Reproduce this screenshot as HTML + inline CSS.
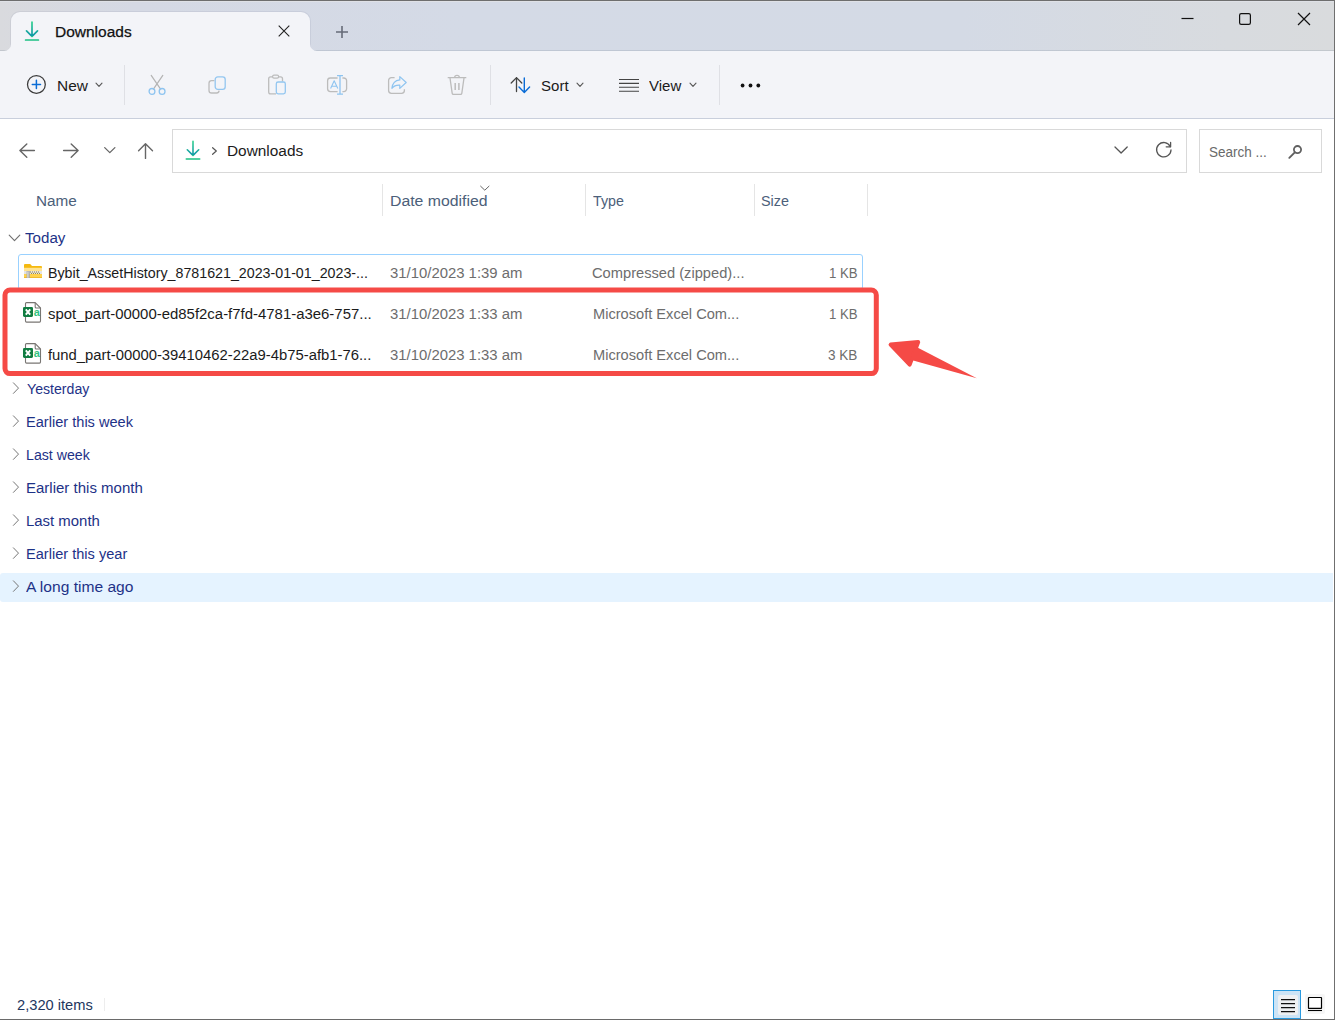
<!DOCTYPE html>
<html lang="en">
<head>
<meta charset="utf-8">
<title>Downloads</title>
<style>
html,body{margin:0;padding:0;}
body{width:1335px;height:1020px;position:relative;overflow:hidden;background:#fff;font-family:"Liberation Sans",sans-serif;color:#1b1b1b;}
.abs{position:absolute;}
.t{position:absolute;white-space:nowrap;line-height:20px;height:20px;transform-origin:0 50%;}
#titlebar{left:0;top:0;width:1335px;height:51px;background:linear-gradient(90deg,#d9dade 0%,#d5d9e4 10%,#d4dae6 35%,#d4dae5 72%,#d8dbdf 92%,#d9dbdd 100%);}
#topline{left:0;top:0;width:1335px;height:1px;background:#6e6e6e;}
#topline2{left:0;top:1px;width:1335px;height:1px;background:#dfe1e6;}
#rightline{left:1334px;top:0;width:1px;height:1020px;background:#6f6f6f;}
#bottomline{left:0;top:1019px;width:1335px;height:1px;background:#6a6a6a;}
#tab{left:11px;top:12px;width:299px;height:39px;background:#f3f4f8;border-radius:9px 9px 0 0;box-shadow:0 0 0 1px rgba(100,110,135,0.10);}
.tabfoot{width:7px;height:7px;top:44px;}
#toolbar{left:0;top:51px;width:1335px;height:67px;background:#f3f4f8;}
#toolline{left:0;top:118px;width:1335px;height:1px;background:#c9cfdc;}
.sep{width:1px;top:65px;height:40px;background:#dfe0e5;}
#addr{left:172px;top:129px;width:1013px;height:42px;border:1px solid #d9d9d9;background:#fff;box-sizing:content-box;}
#search{left:1199px;top:129px;width:121px;height:42px;border:1px solid #d9d9d9;background:#fff;}
.colsep{width:1px;top:184px;height:32px;background:#e5e5e5;}
.hdr{color:#4c607a;font-size:15.4px;}
.grp{color:#1e3287;font-size:15.4px;}
.fn{color:#1b1b1b;font-size:15.4px;}
.meta{color:#6d6d6d;font-size:15.4px;}
#selrow{left:18px;top:254px;width:843px;height:34px;border:1px solid #99d1ff;border-radius:3px;background:#fff;}
#hot{left:0;top:573px;width:1333px;height:29px;background:#e5f3ff;border-radius:3px 0 0 3px;}
#redbox{left:4px;top:290px;width:870px;height:82px;border:4px solid #f44747;border-radius:9px;box-sizing:content-box;}
svg{position:absolute;overflow:visible;}
</style>
</head>
<body>
<!-- title bar -->
<div class="abs" id="titlebar"></div>
<div class="abs" style="left:0;top:50px;width:1335px;height:1px;background:rgba(120,130,150,0.22);"></div>
<div class="abs" id="tab"></div>
<svg class="tabfoot" style="left:4px" width="7" height="7" viewBox="0 0 7 7"><path d="M7 0V7H0A7 7 0 0 0 7 0Z" fill="#f3f4f8"/></svg>
<svg class="tabfoot" style="left:310px" width="7" height="7" viewBox="0 0 7 7"><path d="M0 0V7H7A7 7 0 0 1 0 0Z" fill="#f3f4f8"/></svg>
<div class="abs" id="toolbar"></div>
<div class="abs" id="toolline"></div>
<div class="abs" id="topline"></div>
<div class="abs" id="topline2"></div>

<!-- tab content -->
<svg style="left:24px;top:20px" width="16" height="22" viewBox="0 0 16 22">
<defs><linearGradient id="dl" x1="0" y1="0" x2="0" y2="1"><stop offset="0" stop-color="#2fd08f"/><stop offset="0.75" stop-color="#1199a6"/><stop offset="0.8" stop-color="#1cc083"/><stop offset="1" stop-color="#1cc083"/></linearGradient></defs>
<path d="M8 2V16M2.5 10.8L8 16.3L13.5 10.8M1.6 20H14.4" fill="none" stroke="url(#dl)" stroke-width="1.7" stroke-linecap="round" stroke-linejoin="round"/>
</svg>
<div class="t" id="tabtitle" style="-webkit-text-stroke:0.25px #111;left:54.7px;top:22.0px;font-size:15.4px;color:#111;transform:scaleX(1.0064);">Downloads</div>
<svg style="left:278px;top:25px" width="12" height="12" viewBox="0 0 12 12"><path d="M0.7 0.7L11.3 11.3M11.3 0.7L0.7 11.3" stroke="#222" stroke-width="1.1" fill="none"/></svg>
<svg style="left:335px;top:25px" width="14" height="14" viewBox="0 0 14 14"><path d="M7 1V13M1 7H13" stroke="#666b78" stroke-width="1.6" fill="none"/></svg>

<!-- window controls -->
<svg style="left:1181px;top:12px" width="14" height="14" viewBox="0 0 14 14"><path d="M0.5 6.5H12.5" stroke="#111" stroke-width="1.2" fill="none"/></svg>
<svg style="left:1238px;top:12px" width="14" height="14" viewBox="0 0 14 14"><rect x="1.6" y="1.6" width="10.8" height="10.8" rx="1.6" stroke="#111" stroke-width="1.2" fill="none"/></svg>
<svg style="left:1297px;top:12px" width="14" height="14" viewBox="0 0 14 14"><path d="M1 1L13 13M13 1L1 13" stroke="#111" stroke-width="1.2" fill="none"/></svg>

<!-- TOOLBAR -->
<div id="tb">
<!-- New -->
<svg style="left:26px;top:74px" width="21" height="21" viewBox="0 0 21 21"><circle cx="10.4" cy="10.4" r="8.9" fill="none" stroke="#3a3a3a" stroke-width="1.25"/><path d="M10.4 6.3V14.5M6.3 10.4H14.5" stroke="#0a6cd6" stroke-width="1.5" stroke-linecap="round" fill="none"/></svg>
<div class="t" id="tnew" style="left:56.5px;top:76.0px;font-size:15.4px;transform:scaleX(1.0038);">New</div>
<svg style="left:95px;top:82px" width="8" height="6" viewBox="0 0 8 6"><path d="M1 1.2L4 4.4L7 1.2" stroke="#555" stroke-width="1.1" fill="none" stroke-linecap="round" stroke-linejoin="round"/></svg>
<div class="abs sep" style="left:124px"></div>
<!-- cut -->
<svg style="left:147px;top:74px" width="20" height="22" viewBox="0 0 20 22"><path d="M4.2 1.4L13.6 15.2M15.8 1.4L6.4 15.2" stroke="#b4b4b4" stroke-width="1.2" fill="none" stroke-linecap="round"/><circle cx="5" cy="17.4" r="2.9" fill="none" stroke="#8ec4f0" stroke-width="1.3"/><circle cx="15.1" cy="17.4" r="2.9" fill="none" stroke="#8ec4f0" stroke-width="1.3"/></svg>
<!-- copy -->
<svg style="left:207px;top:75px" width="20" height="20" viewBox="0 0 20 20"><path d="M7.4 5.6H4.6A2.6 2.6 0 0 0 2 8.2V15.4A2.6 2.6 0 0 0 4.6 18H9.6A2.6 2.6 0 0 0 12.1 15.6" fill="none" stroke="#bcbcbc" stroke-width="1.3"/><rect x="8.2" y="1.9" width="10" height="12.4" rx="2.6" fill="none" stroke="#93c6f0" stroke-width="1.3"/></svg>
<!-- paste -->
<svg style="left:267px;top:74px" width="20" height="22" viewBox="0 0 20 22"><path d="M9 19.8H3.6A1.9 1.9 0 0 1 1.7 17.9V4.7A1.9 1.9 0 0 1 3.6 2.8H13.6A1.9 1.9 0 0 1 15.5 4.7V7.6" fill="none" stroke="#bcbcbc" stroke-width="1.3"/><rect x="5.6" y="1.2" width="6" height="2.9" rx="1.4" fill="#f3f4f8" stroke="#bcbcbc" stroke-width="1.2"/><rect x="9.3" y="8" width="9" height="11.9" rx="1.8" fill="#f3f4f8" stroke="#93c6f0" stroke-width="1.3"/></svg>
<!-- rename -->
<svg style="left:326px;top:74px" width="22" height="22" viewBox="0 0 22 22"><path d="M11.6 4H4.4A2.8 2.8 0 0 0 1.6 6.800000000000001V14.8A2.8 2.8 0 0 0 4.4 17.6H11.6M16.4 4H17.8A2.8 2.8 0 0 1 20.6 6.8V14.8A2.8 2.8 0 0 1 17.8 17.6H16.4" fill="none" stroke="#bcbcbc" stroke-width="1.3"/><path d="M11 1.6H17M11 20.2H17M14 1.6V20.2" stroke="#8ec4f0" stroke-width="1.3" fill="none"/><path d="M4.6 14.6L8.2 6.8L11.8 14.6M5.8 12.2H10.6" stroke="#8ec4f0" stroke-width="1.1" fill="none" stroke-linejoin="round"/></svg>
<!-- share -->
<svg style="left:387px;top:74px" width="22" height="22" viewBox="0 0 22 22"><path d="M7.6 3.7H4.4A2.8 2.8 0 0 0 1.6 6.5V16.6A2.8 2.8 0 0 0 4.4 19.4H14.6A2.8 2.8 0 0 0 17.4 16.6V15.2" fill="none" stroke="#bcbcbc" stroke-width="1.3"/><path d="M12.8 2.6L19.2 8.5L12.8 14.4V11.2C9.4 11 6.8 12 4.9 14.4C5.4 9.600000000000001 8.2 6.4 12.8 5.9Z" fill="none" stroke="#8ec4f0" stroke-width="1.2" stroke-linejoin="round"/></svg>
<!-- delete -->
<svg style="left:447px;top:74px" width="20" height="22" viewBox="0 0 20 22"><path d="M1.2 3.7H18.8M7.7 3.5A2.3 2.1 0 0 1 12.3 3.5M3 4L5.200000000000001 19.3A1.2 1.2 0 0 0 6.4 20.3H13.6A1.2 1.2 0 0 0 14.8 19.3L17 4" fill="none" stroke="#bcbcbc" stroke-width="1.3" stroke-linecap="round"/><path d="M8.2 9V16M11.9 9V16" stroke="#bcbcbc" stroke-width="1.5" fill="none"/></svg>
<div class="abs sep" style="left:490px"></div>
<!-- sort -->
<svg style="left:509px;top:75px" width="24" height="20" viewBox="0 0 24 20"><path d="M7.5 16.5V2.7M2.2 8L7.5 2.6L12.8 8" stroke="#444" stroke-width="1.3" fill="none" stroke-linecap="round" stroke-linejoin="round"/><path d="M15.3 3V17.2M10 12L15.3 17.4L20.6 12" stroke="#0a6cd6" stroke-width="1.4" fill="none" stroke-linecap="round" stroke-linejoin="round"/></svg>
<div class="t" id="tsort" style="left:541.1px;top:76.0px;font-size:15.4px;transform:scaleX(0.9762);">Sort</div>
<svg style="left:576px;top:82px" width="8" height="6" viewBox="0 0 8 6"><path d="M1 1.2L4 4.4L7 1.2" stroke="#555" stroke-width="1.1" fill="none" stroke-linecap="round" stroke-linejoin="round"/></svg>
<!-- view -->
<svg style="left:619px;top:78px" width="20" height="14" viewBox="0 0 20 14"><path d="M0 1.5H20M0 5.4H20M0 9.3H20M0 13.2H20" stroke="#444" stroke-width="1.1" fill="none"/></svg>
<div class="t" id="tview" style="left:649.0px;top:76.0px;font-size:15.4px;transform:scaleX(0.9742);">View</div>
<svg style="left:689px;top:82px" width="8" height="6" viewBox="0 0 8 6"><path d="M1 1.2L4 4.4L7 1.2" stroke="#555" stroke-width="1.1" fill="none" stroke-linecap="round" stroke-linejoin="round"/></svg>
<div class="abs sep" style="left:719px"></div>
<svg style="left:739px;top:82px" width="22" height="6" viewBox="0 0 22 6"><circle cx="3.6" cy="3.5" r="1.9" fill="#111"/><circle cx="11.5" cy="3.5" r="1.9" fill="#111"/><circle cx="19.3" cy="3.5" r="1.9" fill="#111"/></svg>
</div>

<!-- ADDRESS -->
<div id="ab">
<svg style="left:18px;top:142px" width="18" height="18" viewBox="0 0 18 18"><path d="M16.4 8.5H2M8.8 1.9L1.9 8.5L8.8 15.3" stroke="#666" stroke-width="1.4" fill="none" stroke-linecap="round" stroke-linejoin="round"/></svg>
<svg style="left:62px;top:142px" width="18" height="18" viewBox="0 0 18 18"><path d="M1.6 8.5H16M9.2 1.9L16.1 8.5L9.2 15.3" stroke="#666" stroke-width="1.4" fill="none" stroke-linecap="round" stroke-linejoin="round"/></svg>
<svg style="left:103px;top:146px" width="14" height="8" viewBox="0 0 14 8"><path d="M1.7 1.6L6.8 6.6L11.9 1.6" stroke="#666" stroke-width="1.3" fill="none" stroke-linecap="round" stroke-linejoin="round"/></svg>
<svg style="left:137px;top:142px" width="18" height="18" viewBox="0 0 18 18"><path d="M8.5 16.4V2M1.6 8.8L8.5 1.8L15.5 8.8" stroke="#666" stroke-width="1.4" fill="none" stroke-linecap="round" stroke-linejoin="round"/></svg>
<div class="abs" id="addr"></div>
<svg style="left:185px;top:139px" width="16" height="22" viewBox="0 0 16 22"><path d="M8 2.2V16M2.3 10.8L8 16.4L13.7 10.8M1.3 20H14.7" fill="none" stroke="url(#dl)" stroke-width="1.6" stroke-linecap="round" stroke-linejoin="round"/></svg>
<svg style="left:211px;top:146px" width="7" height="10" viewBox="0 0 7 10"><path d="M1.6 1.7L5.3 5L1.6 8.3" stroke="#555" stroke-width="1.2" fill="none" stroke-linecap="round" stroke-linejoin="round"/></svg>
<div class="t" id="taddr" style="left:227.3px;top:141.0px;font-size:15.4px;transform:scaleX(1.0003);">Downloads</div>
<svg style="left:1113px;top:145px" width="16" height="10" viewBox="0 0 16 10"><path d="M2 2L8.1 8L14.2 2" stroke="#555" stroke-width="1.3" fill="none" stroke-linecap="round" stroke-linejoin="round"/></svg>
<svg style="left:1154px;top:140px" width="20" height="20" viewBox="0 0 20 20"><path d="M16.3 6.6A7.2 7.2 0 1 0 17 10" stroke="#555" stroke-width="1.3" fill="none" stroke-linecap="round"/><path d="M16.6 2.4V6.8H12.2" stroke="#555" stroke-width="1.3" fill="none" stroke-linecap="round" stroke-linejoin="round"/></svg>
<div class="abs" id="search"></div>
<div class="t" id="tsearch" style="left:1209.1px;top:142.0px;font-size:15.4px;color:#6a6a6a;transform:scaleX(0.8760);">Search ...</div>
<svg style="left:1286px;top:143px" width="18" height="18" viewBox="0 0 18 18"><circle cx="11.5" cy="6.6" r="3.6" fill="none" stroke="#606060" stroke-width="1.8"/><path d="M8.8 9.3L3.3 14.8" stroke="#606060" stroke-width="1.9" fill="none" stroke-linecap="round"/></svg>
</div>

<!-- LIST -->
<div id="list">
<div class="abs colsep" style="left:382px"></div>
<div class="abs colsep" style="left:585px"></div>
<div class="abs colsep" style="left:754px"></div>
<div class="abs colsep" style="left:867px"></div>
<div class="t hdr" id="hname" style="left:36.1px;top:191.0px;transform:scaleX(0.9941);">Name</div>
<div class="t hdr" id="hdate" style="left:389.7px;top:191.0px;transform:scaleX(1.0276);">Date modified</div>
<div class="t hdr" id="htype" style="left:593.2px;top:191.0px;transform:scaleX(0.9255);">Type</div>
<div class="t hdr" id="hsize" style="left:761.2px;top:191.0px;transform:scaleX(0.9325);">Size</div>
<svg style="left:480px;top:185px" width="10" height="6" viewBox="0 0 10 6"><path d="M0.6 1.2L4.8 5.2L9 1.2" stroke="#666" stroke-width="1" fill="none" stroke-linecap="round" stroke-linejoin="round"/></svg>
<svg style="left:8px;top:233px" width="12" height="9" viewBox="0 0 12 9"><path d="M1.2 2.2L6.5 7.6L11.8 2.2" stroke="#707070" stroke-width="1.15" fill="none" stroke-linecap="round" stroke-linejoin="round"/></svg>
<div class="t grp" id="g0" style="left:25.3px;top:228.0px;transform:scaleX(0.9843);">Today</div>
<div class="abs" id="hot"></div>
<div class="abs" id="selrow"></div>
<svg style="left:24px;top:264px" width="18" height="14" viewBox="0 0 18 14"><path d="M0 1A1 1 0 0 1 1 0H6.2L8 2H17A1 1 0 0 1 18 3V13A1 1 0 0 1 17 14H1A1 1 0 0 1 0 13Z" fill="#f5b90f"/><rect x="0" y="3.8" width="18" height="3.4" fill="#ffe391"/><rect x="0" y="7" width="18" height="3.2" fill="#e4e4e4"/><rect x="0" y="10.1" width="18" height="3.9" fill="#ffd24d"/><rect x="0" y="13.3" width="18" height="0.7" fill="#eab220"/><path d="M6 8H16M7 9.4H17" stroke="#8a7423" stroke-width="0.9" stroke-dasharray="1 1" fill="none"/><rect x="2.6" y="7" width="3.2" height="7" fill="#a9a9a9"/><rect x="3.2" y="7.4" width="1.4" height="6.3" fill="#d6d6d6"/></svg>
<div class="t fn" id="n0" style="left:47.7px;top:263.0px;transform:scaleX(0.9256);">Bybit_AssetHistory_8781621_2023-01-01_2023-...</div>
<div class="t meta" id="d0" style="left:389.7px;top:263.0px;transform:scaleX(0.9670);">31/10/2023 1:39 am</div>
<div class="t meta" id="ty0" style="left:592.1px;top:263.0px;transform:scaleX(0.9531);">Compressed (zipped)...</div>
<div class="t meta" id="s0" style="left:829.1px;top:263.0px;transform:scaleX(0.8572);">1 KB</div>
<svg style="left:22px;top:302px" width="20" height="21" viewBox="0 0 20 21"><path d="M3.5 1.600000000000001A1 1 0 0 1 4.5 0.6H13.2L18.5 6V19.1A1 1 0 0 1 17.5 20.1H4.5A1 1 0 0 1 3.5 19.1Z" fill="#fff" stroke="#797673" stroke-width="1.1" stroke-linejoin="round"/><path d="M13.2 0.8V5A1 1 0 0 0 14.2 6H18.3" fill="none" stroke="#797673" stroke-width="1.1"/><rect x="1" y="5" width="10" height="9.9" rx="1.3" fill="#107c41"/><path d="M3.8 7.3L8.2 12.7M8.2 7.3L3.8 12.7" stroke="#fff" stroke-width="1.9" fill="none"/><text x="11.7" y="14" style="font-family:'Liberation Sans',sans-serif;font-size:11px;font-weight:bold" fill="#33c481">a</text></svg>
<div class="t fn" id="n1" style="left:48.1px;top:304.0px;transform:scaleX(0.9700);">spot_part-00000-ed85f2ca-f7fd-4781-a3e6-757...</div>
<div class="t meta" id="d1" style="left:389.7px;top:304.0px;transform:scaleX(0.9670);">31/10/2023 1:33 am</div>
<div class="t meta" id="ty1" style="left:593.1px;top:304.0px;transform:scaleX(0.9500);">Microsoft Excel Com...</div>
<div class="t meta" id="s1" style="left:829.1px;top:304.0px;transform:scaleX(0.8572);">1 KB</div>
<svg style="left:22px;top:343px" width="20" height="21" viewBox="0 0 20 21"><path d="M3.5 1.600000000000001A1 1 0 0 1 4.5 0.6H13.2L18.5 6V19.1A1 1 0 0 1 17.5 20.1H4.5A1 1 0 0 1 3.5 19.1Z" fill="#fff" stroke="#797673" stroke-width="1.1" stroke-linejoin="round"/><path d="M13.2 0.8V5A1 1 0 0 0 14.2 6H18.3" fill="none" stroke="#797673" stroke-width="1.1"/><rect x="1" y="5" width="10" height="9.9" rx="1.3" fill="#107c41"/><path d="M3.8 7.3L8.2 12.7M8.2 7.3L3.8 12.7" stroke="#fff" stroke-width="1.9" fill="none"/><text x="11.7" y="14" style="font-family:'Liberation Sans',sans-serif;font-size:11px;font-weight:bold" fill="#33c481">a</text></svg>
<div class="t fn" id="n2" style="left:48.4px;top:345.0px;transform:scaleX(0.9639);">fund_part-00000-39410462-22a9-4b75-afb1-76...</div>
<div class="t meta" id="d2" style="left:389.7px;top:345.0px;transform:scaleX(0.9670);">31/10/2023 1:33 am</div>
<div class="t meta" id="ty2" style="left:593.1px;top:345.0px;transform:scaleX(0.9500);">Microsoft Excel Com...</div>
<div class="t meta" id="s2" style="left:827.9px;top:345.0px;transform:scaleX(0.8802);">3 KB</div>
<svg style="left:11px;top:382px" width="8" height="12" viewBox="0 0 8 12"><path d="M2.4 0.8L7.5 6.1L2.4 11.4" stroke="#767676" stroke-width="1" fill="none" stroke-linecap="round" stroke-linejoin="round"/></svg>
<div class="t grp" id="g1" style="left:26.9px;top:379.0px;transform:scaleX(0.9181);">Yesterday</div>
<svg style="left:11px;top:415px" width="8" height="12" viewBox="0 0 8 12"><path d="M2.4 0.8L7.5 6.1L2.4 11.4" stroke="#767676" stroke-width="1" fill="none" stroke-linecap="round" stroke-linejoin="round"/></svg>
<div class="t grp" id="g2" style="left:26.0px;top:412.0px;transform:scaleX(0.9479);">Earlier this week</div>
<svg style="left:11px;top:448px" width="8" height="12" viewBox="0 0 8 12"><path d="M2.4 0.8L7.5 6.1L2.4 11.4" stroke="#767676" stroke-width="1" fill="none" stroke-linecap="round" stroke-linejoin="round"/></svg>
<div class="t grp" id="g3" style="left:26.1px;top:445.0px;transform:scaleX(0.9212);">Last week</div>
<svg style="left:11px;top:481px" width="8" height="12" viewBox="0 0 8 12"><path d="M2.4 0.8L7.5 6.1L2.4 11.4" stroke="#767676" stroke-width="1" fill="none" stroke-linecap="round" stroke-linejoin="round"/></svg>
<div class="t grp" id="g4" style="left:25.7px;top:478.0px;transform:scaleX(0.9750);">Earlier this month</div>
<svg style="left:11px;top:514px" width="8" height="12" viewBox="0 0 8 12"><path d="M2.4 0.8L7.5 6.1L2.4 11.4" stroke="#767676" stroke-width="1" fill="none" stroke-linecap="round" stroke-linejoin="round"/></svg>
<div class="t grp" id="g5" style="left:25.7px;top:511.0px;transform:scaleX(0.9701);">Last month</div>
<svg style="left:11px;top:547px" width="8" height="12" viewBox="0 0 8 12"><path d="M2.4 0.8L7.5 6.1L2.4 11.4" stroke="#767676" stroke-width="1" fill="none" stroke-linecap="round" stroke-linejoin="round"/></svg>
<div class="t grp" id="g6" style="left:26.0px;top:544.0px;transform:scaleX(0.9473);">Earlier this year</div>
<svg style="left:11px;top:580px" width="8" height="12" viewBox="0 0 8 12"><path d="M2.4 0.8L7.5 6.1L2.4 11.4" stroke="#767676" stroke-width="1" fill="none" stroke-linecap="round" stroke-linejoin="round"/></svg>
<div class="t grp" id="g7" style="left:26.2px;top:577.0px;transform:scaleX(1.0125);">A long time ago</div>
<svg style="left:0;top:0" width="1335" height="1020" viewBox="0 0 1335 1020"><rect x="5" y="290" width="871.3" height="83.6" rx="5" fill="none" stroke="#f54a46" stroke-width="5"/><path d="M890.6 344.6L918.2 342.1L909.7 364.6Z" fill="#f54a46" stroke="#f54a46" stroke-width="4" stroke-linejoin="round"/><path d="M915.5 346.4L976.8 378.2L910.5 359.7Z" fill="#f54a46"/></svg>
</div>

<!-- STATUS -->
<div id="status">
<div class="t" id="tstatus" style="left:16.7px;top:995.0px;font-size:15.4px;color:#23365e;transform:scaleX(0.9526);">2,320 items</div>
<div class="abs" style="left:104px;top:998px;width:1px;height:13px;background:#ededed;"></div>
<div class="abs" style="left:1273px;top:990px;width:26px;height:27px;border:1px solid #2a9adf;background:#cce4f6;"></div>
<div class="abs" style="left:1278px;top:995px;width:20px;height:20px;background:#eef0f2;border-radius:2px;"></div>
<svg style="left:1281px;top:998px" width="14" height="15" viewBox="0 0 14 15"><path d="M0 1.6H14M0 5.6H14M0 9.6H14M0 13.6H14" stroke="#111" stroke-width="1.1" fill="none"/></svg>
<div class="abs" style="left:1305px;top:994px;width:20px;height:20px;background:#f6f6f6;border-radius:2px;"></div>
<svg style="left:1307px;top:996px" width="16" height="16" viewBox="0 0 16 16"><rect x="1.5" y="1.5" width="13" height="10.8" rx="0.4" fill="#fff" stroke="#000" stroke-width="1.2"/><path d="M1 14.5H15" stroke="#000" stroke-width="1.1"/></svg>
</div>

<div class="abs" id="rightline"></div>
<div class="abs" id="bottomline"></div>
</body>
</html>
